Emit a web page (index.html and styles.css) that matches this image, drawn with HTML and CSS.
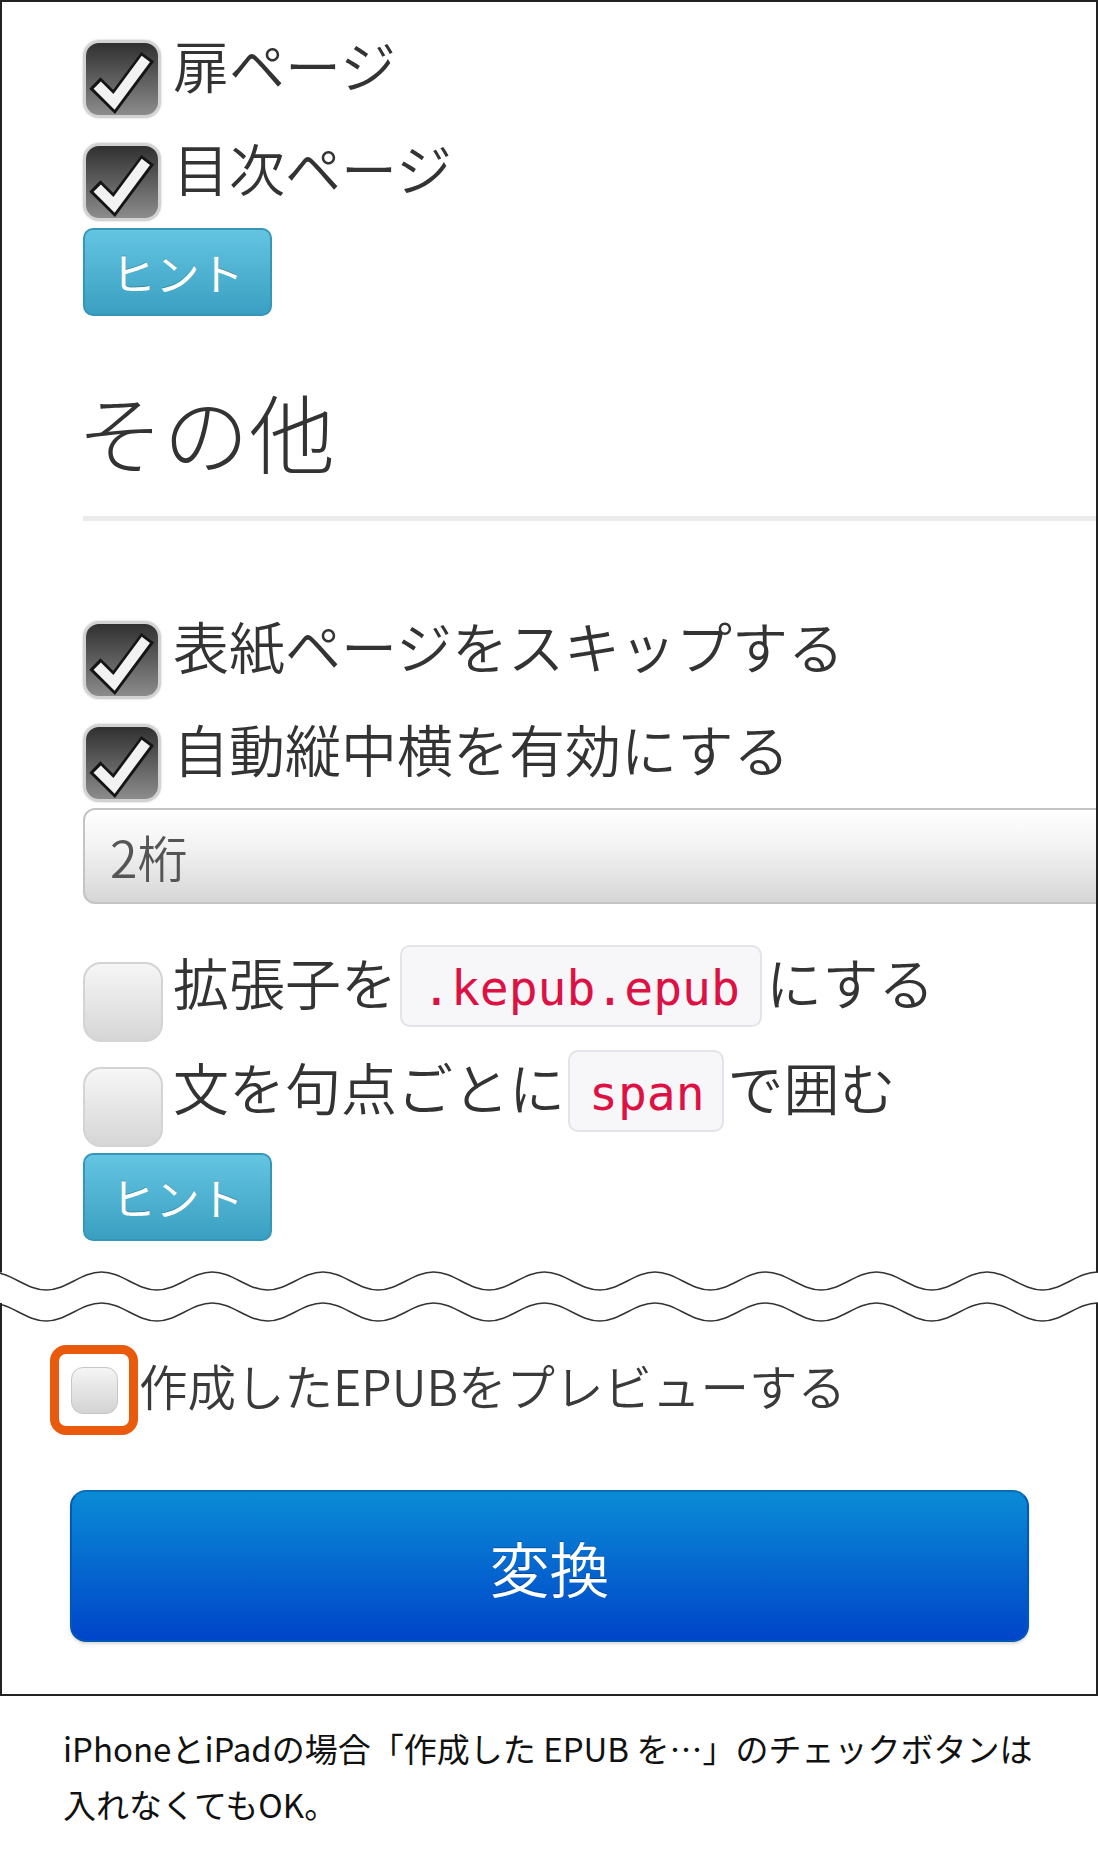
FILE: index.html
```html
<!DOCTYPE html>
<html lang="ja">
<head>
<meta charset="utf-8">
<title>EPUB 変換オプション</title>
<link rel="stylesheet" href="styles.css">
</head>
<body>
<div class="shot">
  <div class="frame frame-top">
    <label class="opt">
      <span class="cb cb-on"><svg viewBox="0 0 77 77" class="tick"><polyline points="9.5,42.8 30,63 66,14.6" class="tick-out"/><polyline points="12,45 30,63 64,17" class="tick-in"/></svg></span>
      <span class="lbl">扉ページ</span>
    </label>
    <label class="opt opt-next">
      <span class="cb cb-on"><svg viewBox="0 0 77 77" class="tick"><polyline points="9.5,42.8 30,63 66,14.6" class="tick-out"/><polyline points="12,45 30,63 64,17" class="tick-in"/></svg></span>
      <span class="lbl">目次ページ</span>
    </label>
    <button class="hint hint-a">ヒント</button>

    <h2 class="section">その他</h2>
    <hr class="rule">

    <label class="opt opt-first">
      <span class="cb cb-on"><svg viewBox="0 0 77 77" class="tick"><polyline points="9.5,42.8 30,63 66,14.6" class="tick-out"/><polyline points="12,45 30,63 64,17" class="tick-in"/></svg></span>
      <span class="lbl">表紙ページをスキップする</span>
    </label>
    <label class="opt opt-next">
      <span class="cb cb-on"><svg viewBox="0 0 77 77" class="tick"><polyline points="9.5,42.8 30,63 66,14.6" class="tick-out"/><polyline points="12,45 30,63 64,17" class="tick-in"/></svg></span>
      <span class="lbl">自動縦中横を有効にする</span>
    </label>
    <div class="select">2桁</div>

    <label class="opt opt-gap">
      <span class="cb cb-off"></span>
      <span class="lbl lbl-code">拡張子を<code class="code">.kepub.epub</code>にする</span>
    </label>
    <label class="opt opt-next2">
      <span class="cb cb-off"></span>
      <span class="lbl lbl-code">文を句点ごとに<code class="code code-short">span</code>で囲む</span>
    </label>
    <button class="hint hint-b">ヒント</button>
  </div>

  <svg class="cut" viewBox="0 0 1098 70" width="1098" height="70">
    <defs>
      <path id="wave" d="M -9.2 10 C 10.91 10 25.99 28 46.15 28 S 81.39 10 101.5 10 S 136.74 28 156.85 28 S 192.09 10 212.2 10 S 247.44 28 267.55 28 S 302.79 10 322.9 10 S 358.14 28 378.25 28 S 413.49 10 433.6 10 S 468.84 28 488.95 28 S 524.19 10 544.3 10 S 579.54 28 599.65 28 S 634.89 10 655 10 S 690.24 28 710.35 28 S 745.59 10 765.7 10 S 800.94 28 821.05 28 S 856.29 10 876.4 10 S 911.64 28 931.75 28 S 966.99 10 987.1 10 S 1022.34 28 1042.45 28 S 1077.69 10 1097.8 10 S 1133.04 28 1153.15 28"/>
    </defs>
    <use href="#wave" class="wave"/>
    <use href="#wave" class="wave" y="31"/>
    <line x1="1" y1="0" x2="1" y2="10.5" class="edge"/>
    <line x1="1097" y1="0" x2="1097" y2="10.5" class="edge"/>
    <line x1="1" y1="41" x2="1" y2="70" class="edge"/>
    <line x1="1097" y1="41" x2="1097" y2="70" class="edge"/>
  </svg>

  <div class="frame frame-bottom">
    <label class="preview">
      <span class="mark"><span class="cb-small"></span></span>
      <span class="plbl">作成したEPUBをプレビューする</span>
    </label>
    <button class="convert">変換</button>
  </div>
</div>
<p class="caption">iPhoneとiPadの場合「作成した EPUB を…」のチェックボタンは<br>入れなくてもOK。</p>
</body>
</html>
```

FILE: styles.css
```css
* { box-sizing: border-box; }

html, body {
  margin: 0;
  padding: 0;
  background: #fff;
}

body {
  width: 1098px;
  font-family: "Noto Sans CJK JP", "Noto Sans", sans-serif;
  color: #333;
}

.shot {
  width: 1098px;
}

.frame {
  border: 2px solid #222;
  overflow: hidden;
  background: #fff;
}

.frame-top {
  border-bottom: none;
  height: 1262px;
  padding: 38px 0 0 81px;
}

.frame-bottom {
  border-top: none;
  height: 364px;
  padding: 13px 0 0 48px;
}

/* checkbox rows */
.opt {
  display: flex;
  align-items: flex-start;
  height: 78px;
}

.opt-next { margin-top: 25px; }
.opt-first { margin-top: 100px; }
.opt-gap { margin-top: 58px; }
.opt-next2 { margin-top: 27px; }

.cb {
  flex: none;
  width: 78px;
  height: 78px;
  border-radius: 16px;
}

.cb-on {
  background: linear-gradient(#303030, #8c8c8c);
  border: 3px solid #d2d2d2;
  box-shadow: 0 0 2px rgba(0, 0, 0, 0.25);
  display: flex;
  align-items: center;
  justify-content: center;
}

.tick {
  width: 72px;
  height: 72px;
  display: block;
}

.tick-out {
  fill: none;
  stroke: #151515;
  stroke-width: 17;
  stroke-linejoin: miter;
  stroke-linecap: butt;
}

.tick-in {
  fill: none;
  stroke: #f2f2f2;
  stroke-width: 11;
  stroke-linejoin: miter;
  stroke-linecap: butt;
}

.cb-off {
  background: linear-gradient(#f6f6f6, #d6d6d6);
  border: 2px solid #d4d4d4;
  width: 80px;
  height: 80px;
  border-radius: 18px;
}

.lbl {
  margin-left: 12px;
  margin-top: -4px;
  font-size: 56px;
  line-height: 56px;
  font-weight: 350;
  color: #333;
  white-space: nowrap;
}

.lbl-code {
  margin-left: 10px;
  margin-top: -17px;
}

.code {
  display: inline-block;
  font-family: "DejaVu Sans Mono", "Liberation Mono", monospace;
  font-size: 48px;
  line-height: 56px;
  color: #dd1144;
  background: #f7f7f9;
  border: 2px solid #e3e3ea;
  border-radius: 10px;
  padding: 13px 20px 9px 20px;
  margin: 0 4px 0 3px;
}

.code-short {
  padding-left: 19px;
  padding-right: 17px;
}

/* hint buttons */
.hint {
  display: block;
  width: 189px;
  height: 88px;
  padding: 0;
  border: 2px solid #3597b8;
  border-radius: 10px;
  background: linear-gradient(#64c5e2, #3a9fc1);
  color: #fff;
  font-family: "Noto Sans CJK JP", sans-serif;
  font-size: 44px;
  font-weight: 400;
  text-shadow: 0 -1px 0 rgba(0, 0, 0, 0.2);
}

.hint-a { margin-top: 7px; }
.hint-b { margin-top: 8px; }

/* section heading */
.section {
  margin: 69px 0 0 -6px;
  font-size: 86px;
  line-height: 92px;
  font-weight: 300;
  color: #333;
}

.rule {
  margin: 39px 0 0 0;
  border: none;
  height: 5px;
  background: #ebebeb;
  width: 1100px;
}

/* select */
.select {
  margin-top: 6px;
  height: 96px;
  width: 1100px;
  border: 2px solid #c4c4c4;
  border-radius: 12px;
  background: linear-gradient(#ffffff 0%, #f3f3f3 40%, #d6d6d6 100%);
  display: flex;
  align-items: center;
  padding-left: 25px;
  font-size: 50px;
  font-weight: 350;
  color: #555;
}

/* cut marks */
.cut {
  display: block;
}

.wave {
  fill: none;
  stroke: #333;
  stroke-width: 1.6;
}

.edge {
  stroke: #222;
  stroke-width: 2;
}

/* preview row */
.preview {
  display: flex;
  align-items: center;
  height: 90px;
}

.mark {
  flex: none;
  width: 88px;
  height: 90px;
  border: 9px solid #ea5a0c;
  border-radius: 16px;
  display: flex;
  align-items: center;
  justify-content: center;
}

.cb-small {
  width: 47px;
  height: 47px;
  border-radius: 12px;
  border: 1px solid #c6c6c6;
  background: linear-gradient(#f5f5f5, #d3d3d3);
}

.plbl {
  margin-left: 1px;
  margin-top: -10px;
  font-size: 48.5px;
  line-height: 60px;
  font-weight: 350;
  color: #3a3a3a;
  white-space: nowrap;
}

.convert {
  display: block;
  margin: 55px 0 0 20px;
  width: 959px;
  height: 152px;
  padding: 0;
  border: 2px solid #0059b3;
  border-top-color: #0a6db8;
  border-radius: 16px;
  background: linear-gradient(#0a8bd6, #0045c9);
  color: #fff;
  font-family: "Noto Sans CJK JP", sans-serif;
  font-size: 60px;
  font-weight: 350;
  text-shadow: 0 -1px 0 rgba(0, 0, 0, 0.25);
  box-shadow: 0 2px 3px rgba(0, 0, 0, 0.15);
}

/* caption */
.caption {
  margin: 24px 0 0 0;
  padding-left: 63px;
  font-family: "Noto Sans CJK JP", sans-serif;
  font-size: 33px;
  line-height: 56px;
  color: #111;
}
```
